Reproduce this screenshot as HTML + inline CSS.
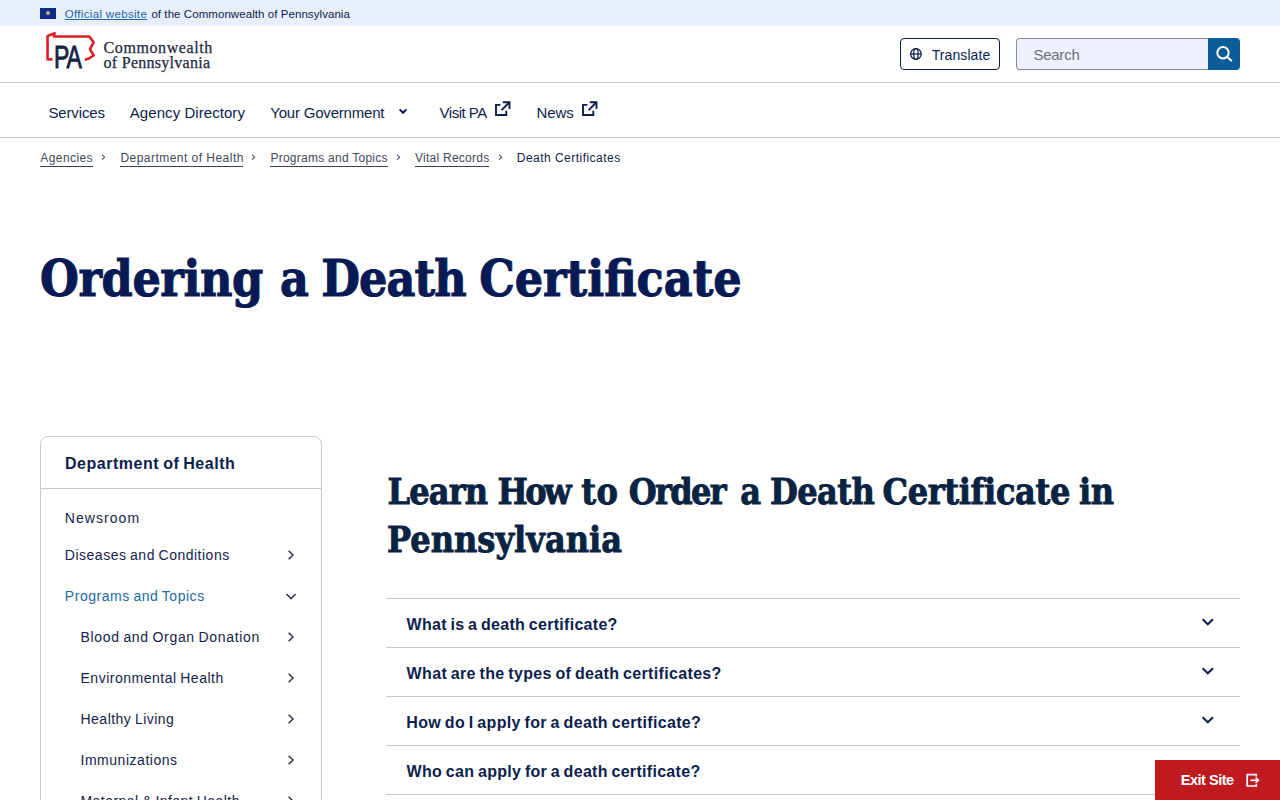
<!DOCTYPE html>
<html lang="en">
<head>
<meta charset="utf-8">
<title>Ordering a Death Certificate</title>
<style>
*{box-sizing:border-box;margin:0;padding:0}
html,body{width:1280px;height:800px;overflow:hidden;background:#fff}
body{font-family:"Liberation Sans",sans-serif;color:#0b1e4d;position:relative}
a{color:inherit;text-decoration:none}
.r{font-family:"Liberation Serif","DejaVu Serif",serif}
.t{position:absolute;white-space:nowrap;line-height:1;display:block}
svg{position:absolute;overflow:visible}
#banner{position:absolute;left:0;top:0;width:1280px;height:26px;background:#e9eefc}
#flag{position:absolute;left:40px;top:8px;width:16px;height:10.7px;background:#0c2a8c}
#flag i{position:absolute;left:5px;top:2.4px;width:6px;height:6px;background:radial-gradient(circle,#d8d29a 0,#a89a58 35%,rgba(60,70,110,.6) 60%,rgba(12,42,140,0) 75%);border-radius:3px}
#hline1{position:absolute;left:0;top:82px;width:1280px;height:1px;background:#c9c9c9}
#hline2{position:absolute;left:0;top:137px;width:1280px;height:1px;background:#c9c9c9}
#translate{position:absolute;left:900px;top:38px;width:100px;height:32px;border:1px solid #0b1e4d;border-radius:4px;background:#fff}
#search{position:absolute;left:1016px;top:38px;width:193px;height:32px;border:1px solid #868b9a;border-right:none;border-radius:4px 0 0 4px;background:#eef1fd}
#sbtn{position:absolute;left:1208px;top:38px;width:32px;height:32px;background:#0d5c9a;border-radius:0 4px 4px 0}
.ul{position:absolute;height:1px;background:#3c4354}
#side{position:absolute;left:40px;top:436px;width:282px;height:380px;border:1px solid #c9c9c9;border-radius:8px 8px 0 0;background:#fff}
#sidehd{position:absolute;left:40px;top:488px;width:282px;height:1px;background:#c9c9c9}
.al{position:absolute;left:386px;width:854px;height:1px;background:#c9c9c9}
#exit{position:absolute;left:1155px;top:760px;width:125px;height:40px;background:#be1a1f}
h1 span,h2 span{display:inline-block}
h1,h2{position:absolute;white-space:nowrap;font-family:"DejaVu Serif","Liberation Serif",serif;font-weight:bold;transform-origin:left top;line-height:1}
</style>
</head>
<body>
<div id="banner"><div id="flag"><i></i></div></div>
<a href="#" class="t" style="left:64.70px;top:8.77px;font-size:11.5px;letter-spacing:0.331px;color:#1b66a3;text-decoration:underline;text-underline-offset:1px;">Official website</a>
<span class="t" style="left:151.40px;top:8.77px;font-size:11.5px;letter-spacing:0.066px;color:#0b1e4d;">of the Commonwealth of Pennsylvania</span>
<svg style="left:40px;top:28px" width="60" height="44" viewBox="40 28 60 44" fill="none" stroke="#dc1f26" stroke-width="2.6" stroke-linejoin="round">
<path d="M52.4 59.35H47.55V36L54.6 33.2L53.9 36.5H89.3L93.6 42.2L90 49.3L93.7 55.5L89 58.4L84.9 59.8"/>
</svg>
<span class="t" style="left:54.4px;top:40.8px;font-size:32.2px;color:#14233f;letter-spacing:-1.6px;transform:scaleX(0.715);transform-origin:left top;-webkit-text-stroke:0.9px #14233f">PA</span>
<span class="t r" style="left:103.60px;top:39.70px;font-size:16px;letter-spacing:0.590px;color:#1f2942;-webkit-text-stroke:0.25px #1f2942;">Commonwealth</span>
<span class="t r" style="left:103.60px;top:55.30px;font-size:16px;letter-spacing:0.275px;color:#1f2942;-webkit-text-stroke:0.25px #1f2942;">of Pennsylvania</span>
<div id="translate"></div>
<svg style="left:909px;top:47px" width="14" height="14" viewBox="0 0 14 14" fill="none" stroke="#0b1e4d" stroke-width="1.25"><circle cx="6.9" cy="7" r="5.3"/><ellipse cx="6.9" cy="7" rx="2.2" ry="5.3"/><path d="M1.6 7h10.6"/></svg>
<span class="t" style="left:931.70px;top:47.85px;font-size:14px;letter-spacing:0.093px;color:#0b1e4d;">Translate</span>
<div id="search"></div><div id="sbtn"></div>
<span class="t" style="left:1033.40px;top:47.20px;font-size:15px;letter-spacing:-0.237px;color:#6a7080;">Search</span>
<svg style="left:1208px;top:38px" width="32" height="32" viewBox="0 0 32 32" fill="none" stroke="#fff" stroke-width="2" stroke-linecap="round"><circle cx="15" cy="14.7" r="5.7"/><path d="M19.3 19L23.3 22.6"/></svg>
<div id="hline1"></div>
<span class="t" style="left:48.40px;top:104.60px;font-size:15px;letter-spacing:-0.131px;color:#0b1e4d;">Services</span>
<span class="t" style="left:129.80px;top:104.60px;font-size:15px;letter-spacing:0.060px;color:#0b1e4d;">Agency Directory</span>
<span class="t" style="left:270.30px;top:104.60px;font-size:15px;letter-spacing:-0.203px;color:#0b1e4d;">Your Government</span>
<span class="t" style="left:439.60px;top:104.60px;font-size:15px;letter-spacing:-0.504px;color:#0b1e4d;">Visit PA</span>
<span class="t" style="left:536.40px;top:104.60px;font-size:15px;letter-spacing:-0.069px;color:#0b1e4d;">News</span>
<svg style="left:397px;top:106px" width="12" height="10" viewBox="0 0 12 10" fill="none" stroke="#0b1e4d" stroke-width="2"><path d="M2.6 3.4L6 6.8L9.4 3.4"/></svg>
<svg style="left:494.1px;top:100px" width="18" height="18" viewBox="0 0 18 18" fill="none" stroke="#0b1e4d" stroke-width="1.9"><path d="M6.4 4.9H2V15H12.3V10.8"/><path d="M8.8 2.2H15.5V9"/><path d="M15.2 2.5L7.6 10.2"/></svg>
<svg style="left:580.6px;top:100px" width="18" height="18" viewBox="0 0 18 18" fill="none" stroke="#0b1e4d" stroke-width="1.9"><path d="M6.4 4.9H2V15H12.3V10.8"/><path d="M8.8 2.2H15.5V9"/><path d="M15.2 2.5L7.6 10.2"/></svg>
<div id="hline2"></div>
<a href="#" class="t" style="left:40.30px;top:151.54px;font-size:12px;letter-spacing:0.419px;color:#43485a;">Agencies</a>
<div class="ul" style="left:40.2px;top:166px;width:52.6px"></div>
<a href="#" class="t" style="left:120.40px;top:151.54px;font-size:12px;letter-spacing:0.469px;color:#43485a;">Department of Health</a>
<div class="ul" style="left:120.3px;top:166px;width:122.6px"></div>
<a href="#" class="t" style="left:270.40px;top:151.54px;font-size:12px;letter-spacing:0.255px;color:#43485a;">Programs and Topics</a>
<div class="ul" style="left:270.3px;top:166px;width:117.6px"></div>
<a href="#" class="t" style="left:415.00px;top:151.54px;font-size:12px;letter-spacing:0.255px;color:#43485a;">Vital Records</a>
<div class="ul" style="left:414.9px;top:166px;width:74.5px"></div>
<span class="t" style="left:516.80px;top:151.54px;font-size:12px;letter-spacing:0.472px;color:#0b1e4d;">Death Certificates</span>
<svg style="left:101.3px;top:153.9px" width="5" height="7" viewBox="0 0 5 7" fill="none" stroke="#50556a" stroke-width="1.15"><path d="M1.1 0.8L3.6 3.2L1.1 5.6"/></svg>
<svg style="left:251.3px;top:153.9px" width="5" height="7" viewBox="0 0 5 7" fill="none" stroke="#50556a" stroke-width="1.15"><path d="M1.1 0.8L3.6 3.2L1.1 5.6"/></svg>
<svg style="left:396.4px;top:153.9px" width="5" height="7" viewBox="0 0 5 7" fill="none" stroke="#50556a" stroke-width="1.15"><path d="M1.1 0.8L3.6 3.2L1.1 5.6"/></svg>
<svg style="left:497.6px;top:153.9px" width="5" height="7" viewBox="0 0 5 7" fill="none" stroke="#50556a" stroke-width="1.15"><path d="M1.1 0.8L3.6 3.2L1.1 5.6"/></svg>
<h1 style="left:39.5px;top:254.1px;font-size:50px;color:#081a54;transform:scaleX(0.8925);word-spacing:-2.9px;-webkit-text-stroke:1.1px #081a54"><span style="letter-spacing:-0.45px;margin-left:0.00px">Ordering</span> <span style="letter-spacing:0.00px;margin-left:4.71px">a</span> <span style="letter-spacing:-0.98px;margin-left:-0.78px">Death</span> <span style="letter-spacing:0.00px;margin-left:0.30px">Certificate</span></h1>
<div id="side"></div><div id="sidehd"></div>
<b class="t" style="left:65.00px;top:456.16px;font-size:16px;letter-spacing:0.525px;color:#0b1e4d;font-weight:bold;word-spacing:-1px;">Department of Health</b>
<span class="t" style="left:64.85px;top:511.25px;font-size:14px;letter-spacing:1.044px;color:#14234b;word-spacing:-0.8px;">Newsroom</span>
<span class="t" style="left:64.85px;top:548.35px;font-size:14px;letter-spacing:0.504px;color:#14234b;word-spacing:-0.8px;">Diseases and Conditions</span>
<svg style="left:286px;top:549.3px" width="10" height="12" viewBox="0 0 10 12" fill="none" stroke="#2a3350" stroke-width="1.5"><path d="M2.6 1.7L7 6L2.6 10.3"/></svg>
<span class="t" style="left:64.85px;top:589.45px;font-size:14px;letter-spacing:0.536px;color:#1b6b9f;word-spacing:-0.8px;">Programs and Topics</span>
<svg style="left:285px;top:591.5px" width="12" height="9" viewBox="0 0 12 9" fill="none" stroke="#2a3350" stroke-width="1.5"><path d="M1.6 2L6.1 6.6L10.6 2"/></svg>
<span class="t" style="left:80.50px;top:630.45px;font-size:14px;letter-spacing:0.669px;color:#14234b;word-spacing:-0.8px;">Blood and Organ Donation</span>
<svg style="left:286px;top:631.4px" width="10" height="12" viewBox="0 0 10 12" fill="none" stroke="#2a3350" stroke-width="1.5"><path d="M2.6 1.7L7 6L2.6 10.3"/></svg>
<span class="t" style="left:80.50px;top:671.45px;font-size:14px;letter-spacing:0.512px;color:#14234b;word-spacing:-0.8px;">Environmental Health</span>
<svg style="left:286px;top:672.4px" width="10" height="12" viewBox="0 0 10 12" fill="none" stroke="#2a3350" stroke-width="1.5"><path d="M2.6 1.7L7 6L2.6 10.3"/></svg>
<span class="t" style="left:80.50px;top:712.45px;font-size:14px;letter-spacing:0.481px;color:#14234b;word-spacing:-0.8px;">Healthy Living</span>
<svg style="left:286px;top:713.4px" width="10" height="12" viewBox="0 0 10 12" fill="none" stroke="#2a3350" stroke-width="1.5"><path d="M2.6 1.7L7 6L2.6 10.3"/></svg>
<span class="t" style="left:80.50px;top:753.45px;font-size:14px;letter-spacing:0.529px;color:#14234b;word-spacing:-0.8px;">Immunizations</span>
<svg style="left:286px;top:754.4px" width="10" height="12" viewBox="0 0 10 12" fill="none" stroke="#2a3350" stroke-width="1.5"><path d="M2.6 1.7L7 6L2.6 10.3"/></svg>
<span class="t" style="left:80.50px;top:794.45px;font-size:14px;letter-spacing:0.452px;color:#14234b;word-spacing:-0.8px;">Maternal &amp; Infant Health</span>
<svg style="left:286px;top:795.4px" width="10" height="12" viewBox="0 0 10 12" fill="none" stroke="#2a3350" stroke-width="1.5"><path d="M2.6 1.7L7 6L2.6 10.3"/></svg>
<h2 style="left:387px;top:474.4px;font-size:35.5px;color:#0a2342;transform:scaleX(0.904);word-spacing:-4.2px;-webkit-text-stroke:0.9px #0a2342"><span style="letter-spacing:-0.97px;margin-left:0.55px">Learn</span> <span style="letter-spacing:-2.95px;margin-left:3.32px">How</span> <span style="letter-spacing:0.55px;margin-left:5.53px">to</span> <span style="letter-spacing:-1.89px;margin-left:3.32px">Order</span> <span style="letter-spacing:0.00px;margin-left:8.85px">a</span> <span style="letter-spacing:-0.69px;margin-left:1.66px">Death</span> <span style="letter-spacing:-0.39px;margin-left:1.11px">Certificate</span> <span style="letter-spacing:-0.55px;margin-left:1.66px">in</span></h2>
<h2 style="left:387px;top:522.4px;font-size:35.5px;color:#0a2342;transform:scaleX(0.904);-webkit-text-stroke:0.9px #0a2342">Pennsylvania</h2>
<div class="al" style="top:598px"></div>
<b class="t" style="left:406.60px;top:617.06px;font-size:16px;letter-spacing:0.297px;color:#0b1e4d;font-weight:bold;word-spacing:-1.1px;">What is a death certificate?</b>
<svg style="left:1200px;top:617px" width="16" height="10" viewBox="0 0 16 10" fill="none" stroke="#0b1e4d" stroke-width="2"><path d="M2.6 2.3L7.8 7.3L13 2.3"/></svg>
<div class="al" style="top:647px"></div>
<b class="t" style="left:406.60px;top:666.06px;font-size:16px;letter-spacing:0.344px;color:#0b1e4d;font-weight:bold;word-spacing:-1.1px;">What are the types of death certificates?</b>
<svg style="left:1200px;top:666px" width="16" height="10" viewBox="0 0 16 10" fill="none" stroke="#0b1e4d" stroke-width="2"><path d="M2.6 2.3L7.8 7.3L13 2.3"/></svg>
<div class="al" style="top:696px"></div>
<b class="t" style="left:406.30px;top:715.06px;font-size:16px;letter-spacing:0.351px;color:#0b1e4d;font-weight:bold;word-spacing:-1.1px;">How do I apply for a death certificate?</b>
<svg style="left:1200px;top:715px" width="16" height="10" viewBox="0 0 16 10" fill="none" stroke="#0b1e4d" stroke-width="2"><path d="M2.6 2.3L7.8 7.3L13 2.3"/></svg>
<div class="al" style="top:745px"></div>
<b class="t" style="left:406.60px;top:764.06px;font-size:16px;letter-spacing:0.303px;color:#0b1e4d;font-weight:bold;word-spacing:-1.1px;">Who can apply for a death certificate?</b>
<div class="al" style="top:794px"></div>
<div id="exit"></div>
<b class="t" style="left:1180.80px;top:772.53px;font-size:14.5px;letter-spacing:-0.494px;color:#fff;font-weight:bold;">Exit Site</b>
<svg style="left:1245px;top:772px" width="16" height="16" viewBox="0 0 16 16" fill="none" stroke="#fff" stroke-width="1.7"><path d="M11.3 4.6V2.6H2.2V14H11.3V12"/><path d="M5.5 8.3H13"/><path d="M10.6 5.6L13.4 8.3L10.6 11" stroke-linejoin="miter"/></svg>
</body>
</html>
